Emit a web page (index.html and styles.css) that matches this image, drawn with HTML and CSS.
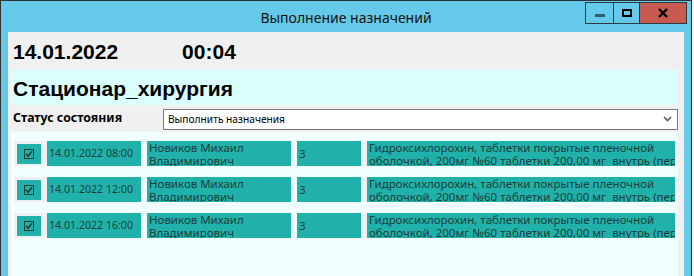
FILE: index.html
```html
<!DOCTYPE html>
<html lang="ru">
<head>
    <meta charset="UTF-8">
    <title>Выполнение назначений</title>
    <link rel="stylesheet" href="styles.css">
</head>
<body>
    <div class="window">
        <div class="titlebar">
            <span></span>
            <div class="title">Выполнение назначений</div>
            <div class="winbtns">
                <div class="wb wb-min"><span class="min-bar"></span></div>
                <div class="wb wb-max"><span class="max-box"></span></div>
                <div class="wb wb-close">
                    <svg width="12" height="10" viewBox="0 0 12 10"><path d="M2 1 L10 9 M10 1 L2 9" stroke="#000" stroke-width="2.4"/></svg>
                </div>
            </div>
        </div>

        <div class="client">
            <div class="datetime">
                <span class="date">14.01.2022</span>
                <span class="time">00:04</span>
            </div>
            <div class="dept">Стационар_хирургия</div>
            <div class="status-row">
                <div class="status-label">Статус состояния</div>
                <div class="combo">
                    <span>Выполнить назначения</span>
                    <svg class="combo-arrow" width="9" height="6" viewBox="0 0 9 6"><path d="M1 1 L4.5 4.5 L8 1" fill="none" stroke="#555" stroke-width="1.6"/></svg>
                </div>
            </div>

            <div class="rows" id="rows"></div>
        </div>
    </div>

    <script>
        var items = [
            { time: '14.01.2022 08:00' },
            { time: '14.01.2022 12:00' },
            { time: '14.01.2022 16:00' }
        ];
        var rows = document.getElementById('rows');
        items.forEach(function (it) {
            var row = document.createElement('div');
            row.className = 'row';
            row.innerHTML = `
                <div class="chk-cell"><div class="chk">
                    <svg width="10" height="10" viewBox="0 0 10 10"><rect x="0.5" y="0.5" width="9" height="9" fill="none" stroke="#1d3b38"/><path d="M2 5 L4 7.2 L8 2.3" fill="none" stroke="#1d3b38" stroke-width="1.6"/></svg>
                </div></div>
                <div class="cell c-date">${it.time}</div>
                <div class="cell c-name">Новиков Михаил<br>Владимирович</div>
                <div class="cell c-qty">3</div>
                <div class="drug-wrap"><div class="cell c-drug">Гидроксихлорохин, таблетки покрытые пленочной<br>оболочкой, 200мг №60 таблетки 200,00 мг&nbsp; внутрь (перорально)</div></div>
            `;
            rows.appendChild(row);
        });
    </script>
</body>
</html>
```

FILE: styles.css
```css
body {
    margin: 0;
    background: #f4f4f4;
    font-family: "Noto Sans", sans-serif;
    width: 694px;
    height: 276px;
    overflow: hidden;
}
.window {
    width: 690px;
    height: 275px;
    border: 1px solid #2e3336;
    border-bottom: none;
    background: #65c9e9;
    display: flex;
    flex-direction: column;
}
.titlebar {
    height: 31px;
    flex-shrink: 0;
    display: grid;
    grid-template-columns: 1fr auto 1fr;
}
.title {
    font-size: 14px;
    color: #111;
    line-height: 33px;
}
.winbtns {
    justify-self: end;
    display: flex;
    height: 20px;
    margin-top: 1px;
    margin-right: 4px;
    border: 1px solid #2a3a40;
}
.wb {
    display: flex;
    align-items: center;
    justify-content: center;
}
.wb-min {
    width: 27px;
    border-right: 1px solid #2a3a40;
}
.wb-max {
    width: 25px;
    border-right: 1px solid #2a3a40;
}
.wb-close {
    width: 46px;
    background: #c75b50;
}
.min-bar {
    width: 10px;
    height: 3px;
    background: #2f5f70;
    margin-top: 4px;
}
.max-box {
    width: 6px;
    height: 4px;
    border: 2px solid #000;
}
.client {
    flex: 1;
    min-height: 0;
    margin: 0 7px;
    background: #f0f0f0;
    padding: 0 3px;
    display: flex;
    flex-direction: column;
}
.datetime {
    height: 36px;
    flex-shrink: 0;
    display: flex;
    align-items: center;
    padding: 2px 0 0 2px;
    font-family: "Liberation Sans", sans-serif;
    font-weight: bold;
    font-size: 21px;
    color: #000;
}
.time {
    margin-left: 64px;
}
.dept {
    height: 35px;
    flex-shrink: 0;
    background: #d9ffff;
    font-family: "Liberation Sans", sans-serif;
    font-weight: bold;
    font-size: 21px;
    line-height: 37px;
    padding-left: 2px;
    margin-right: 3px;
}
.status-row {
    height: 27px;
    flex-shrink: 0;
    display: flex;
    align-items: center;
}
.status-label {
    width: 150px;
    padding-left: 2px;
    font-size: 12.3px;
    font-weight: bold;
    margin-top: -3px;
}
.combo {
    flex: 1;
    height: 19px;
    margin-right: 3px;
    margin-top: 1px;
    background: #fff;
    border: 1px solid #7a7a7a;
    display: flex;
    align-items: center;
    justify-content: space-between;
    padding: 0 5px 0 4px;
    font-size: 10.2px;
    color: #000;
}
.rows {
    flex: 1;
    background: #f0ffff;
    margin-right: 3px;
    padding: 9px 0 0 3px;
    display: flex;
    flex-direction: column;
    gap: 11px;
}
.row {
    display: flex;
    height: 25px;
}
.chk-cell {
    width: 33px;
    background: #f0f0f0;
    padding: 3px 0 0 3px;
    box-sizing: border-box;
}
.chk {
    width: 24px;
    height: 20px;
    background: #20b2aa;
    display: flex;
    align-items: center;
    justify-content: center;
}
.cell {
    background: #20b2aa;
    color: #1d3d3a;
    font-size: 11.5px;
    line-height: 13px;
    overflow: hidden;
    white-space: nowrap;
    padding-left: 2px;
    box-sizing: border-box;
    height: 25px;
}
.c-date {
    width: 94px;
    font-size: 10.6px;
    display: flex;
    align-items: center;
    margin-right: 6px;
}
.c-name {
    width: 144px;
    margin-right: 6px;
}
.c-qty {
    width: 64px;
    display: flex;
    align-items: center;
}
.drug-wrap {
    background: #f0f0f0;
    padding-left: 6px;
}
.c-drug {
    width: 308px;
}
```
